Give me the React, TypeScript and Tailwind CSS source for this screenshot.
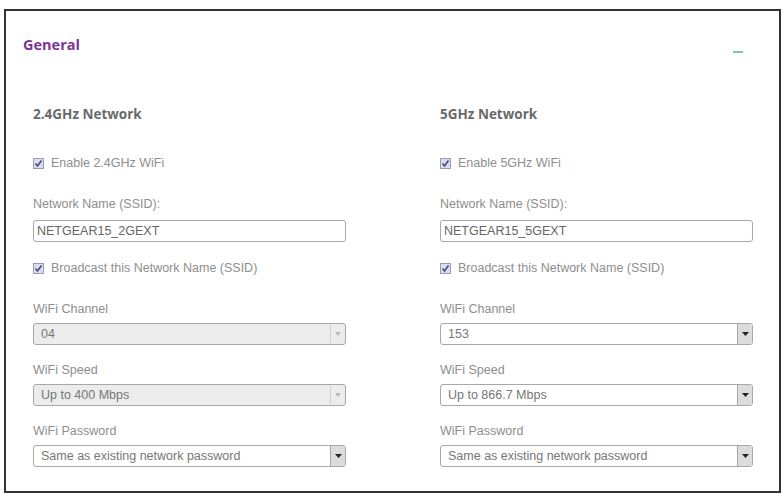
import React from "react";

const Check = () => (
  <span className="inline-flex w-[11px] h-[11px] border border-[#9a9ab0] bg-[#dcdcee] items-center justify-center shrink-0">
    <svg width="9" height="9" viewBox="0 0 9 9">
      <path d="M1.5 4.5 L3.5 7 L7.5 1.5" stroke="#4a4a8a" strokeWidth="1.6" fill="none" />
    </svg>
  </span>
);

const CheckRow = ({ label, className }: { label: string; className: string }) => (
  <div className={`flex items-center h-4 gap-[7px] ${className}`}>
    <Check />
    <span className="text-[12.5px] text-[#8e8e8e] leading-4">{label}</span>
  </div>
);

const Label = ({ text, className }: { text: string; className: string }) => (
  <div className={`h-4 leading-4 text-[12.5px] text-[#8e8e8e] ${className}`}>{text}</div>
);

const Select = ({ value, disabled, className }: { value: string; disabled?: boolean; className: string }) => (
  <div
    className={`w-[313px] h-[22px] border border-[#a8a8a8] rounded-[3px] flex items-center ${
      disabled ? "bg-[#ececec]" : "bg-white"
    } ${className}`}
  >
    <span className="flex-1 pl-[7px] text-[12.5px] text-[#777] leading-4 truncate">{value}</span>
    {disabled ? (
      <span className="w-[14px] h-[18px] mr-[1px] border-l border-[#d0d0d0] flex items-center justify-center">
        <svg width="6" height="4" viewBox="0 0 6 4">
          <path d="M0 0 H6 L3 4 Z" fill="#b8b8b8" />
        </svg>
      </span>
    ) : (
      <span className="w-[15px] h-[20px] border-l border-[#a8a8a8] bg-[#dcdcdc] rounded-r-[2px] flex items-center justify-center">
        <svg width="7" height="4" viewBox="0 0 7 4">
          <path d="M0 0 H7 L3.5 4 Z" fill="#222" />
        </svg>
      </span>
    )}
  </div>
);

const Column = ({
  title,
  enable,
  ssid,
  channel,
  speed,
  disabled,
}: {
  title: string;
  enable: string;
  ssid: string;
  channel: string;
  speed: string;
  disabled?: boolean;
}) => (
  <div className="flex flex-col">
    <div className="h-4 leading-4 text-[13.5px] font-bold text-[#6a6a6a]" style={{ fontFamily: '"Open Sans", sans-serif' }}>
      {title}
    </div>
    <CheckRow label={enable} className="mt-[33px]" />
    <Label text="Network Name (SSID):" className="mt-[25px]" />
    <div className="w-[313px] h-[22px] mt-[8px] border border-[#a8a8a8] rounded-[3px] bg-white flex items-center">
      <span className="pl-[3px] text-[12.5px] text-[#666] leading-4">{ssid}</span>
    </div>
    <CheckRow label="Broadcast this Network Name (SSID)" className="mt-[18px]" />
    <Label text="WiFi Channel" className="mt-[25px]" />
    <Select value={channel} disabled={disabled} className="mt-[6px]" />
    <Label text="WiFi Speed" className="mt-[17px]" />
    <Select value={speed} disabled={disabled} className="mt-[6px]" />
    <Label text="WiFi Password" className="mt-[17px]" />
    <Select value="Same as existing network password" className="mt-[6px]" />
  </div>
);

export default function App() {
  return (
    <div
      className="w-[784px] h-[496px] bg-white pt-[9px] pl-[4px]"
      style={{ fontFamily: '"Liberation Sans", Arial, sans-serif' }}
    >
      <div className="w-[777px] h-[484px] border-2 border-[#333]">
        <div className="flex justify-between pt-[26px] pl-[17px] pr-[36px]">
          <div
            className="h-4 leading-4 text-[14.5px] font-bold text-[#7e3590]"
            style={{ fontFamily: '"Open Sans", sans-serif' }}
          >
            General
          </div>
          <div className="w-[10px] h-[2px] bg-[#7cc4b4] mt-[14px]" />
        </div>
        <div className="grid grid-cols-[407px_1fr] pl-[27px] mt-[53px]">
          <Column
            title="2.4GHz Network"
            enable="Enable 2.4GHz WiFi"
            ssid="NETGEAR15_2GEXT"
            channel="04"
            speed="Up to 400 Mbps"
            disabled
          />
          <Column
            title="5GHz Network"
            enable="Enable 5GHz WiFi"
            ssid="NETGEAR15_5GEXT"
            channel="153"
            speed="Up to 866.7 Mbps"
          />
        </div>
      </div>
    </div>
  );
}
